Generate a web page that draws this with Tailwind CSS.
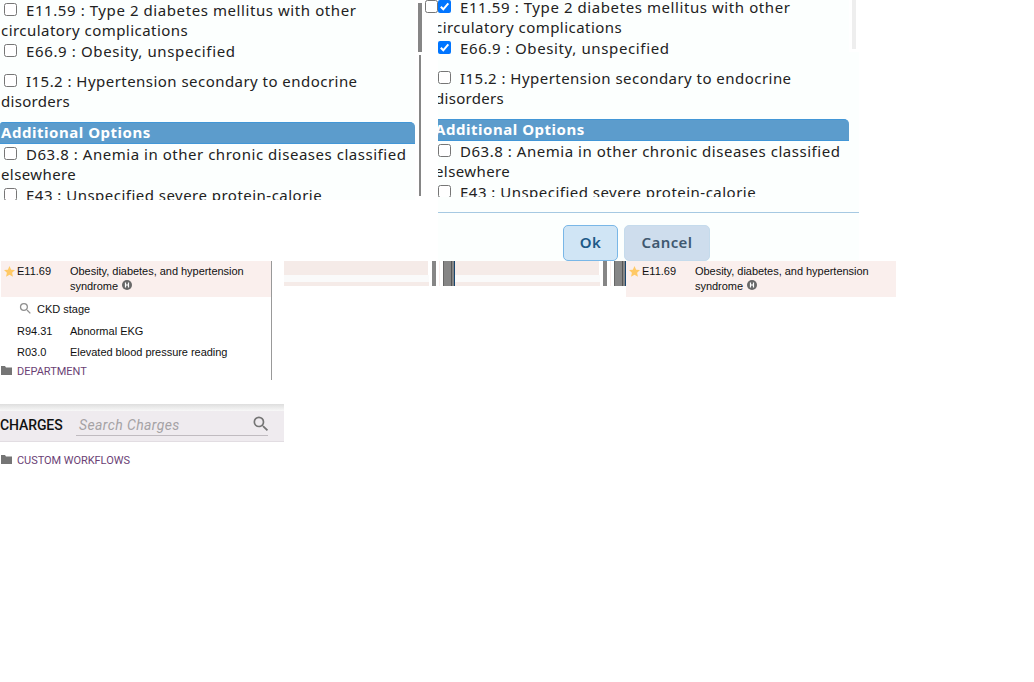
<!DOCTYPE html>
<html lang="en">
<head>
<meta charset="utf-8">
<title>Diagnosis options</title>
<script src="https://cdn.jsdelivr.net/npm/@tailwindcss/browser@4"></script>
</head>
<body class="bg-white w-[1034px] h-[682px] overflow-hidden text-[#222]">
<svg class="hidden">
  <symbol id="star" viewBox="0 0 24 24"><path fill="#ffc966" d="M12 0l3.600 8 8.400.900-6.300 5.800 1.800 8.600L12 19l-7.500 4.300 1.800-8.600L0 8.900 8.400 8z"/></symbol>
  <symbol id="folder" viewBox="0 0 11 9"><path fill="#757575" d="M0 0h4l1 1.500h6V9H0z"/></symbol>
  <symbol id="search" viewBox="0 0 24 24"><path fill="#757575" d="M15.500 14h-.79l-.28-.27A6.471 6.471 0 0 0 16 9.500 6.500 6.500 0 1 0 9.500 16c1.610 0 3.090-.59 4.230-1.570l.27.28v.79l5 4.990L20.490 19l-4.990-5zm-6 0C7.010 14 5 11.990 5 9.500S7.010 5 9.500 5 14 7.010 14 9.500 11.990 14 9.500 14z"/></symbol>
  <symbol id="hcc" viewBox="0 0 10 10"><circle cx="5" cy="5" r="5" fill="#686868"/><path d="M3.500 2.600v4.800M6.500 2.600v4.800M3.500 5h3" stroke="#fff" stroke-width="1.200" fill="none"/></symbol>
  <symbol id="on" viewBox="0 0 13 13"><rect width="13" height="13" rx="2" fill="#0075ff"/><path d="M2.800 6.700l2.500 2.600 5-6" stroke="#fff" stroke-width="2" fill="none"/></symbol>
  <symbol id="off" viewBox="0 0 13 13"><rect x=".5" y=".5" width="12" height="12" rx="2" fill="#fff" stroke="#767676"/></symbol>
</svg>

<div class="flex h-[261px] font-['Noto_Sans'] text-[15px] leading-[20px] whitespace-nowrap tracking-[0.5px]">
  <section class="w-[415px] h-[200px] bg-[#fcfffe] overflow-hidden">
    <div class="flex h-5 pl-1"><svg class="w-[13px] h-[13px] mt-[3px] mr-[9px] shrink-0"><use href="#off"/></svg><span class="tracking-[0.58px]">E11.59 : Type 2 diabetes mellitus with other</span></div>
    <div class="h-5 pl-[1px] tracking-[0.46px]">circulatory complications</div>
    <div class="flex h-[31px] pl-1 pt-[1px]"><svg class="w-[13px] h-[13px] mt-[3px] mr-[9px] shrink-0"><use href="#off"/></svg><span class="tracking-[0.63px]">E66.9 : Obesity, unspecified</span></div>
    <div class="flex h-5 pl-1"><svg class="w-[13px] h-[13px] mt-[3px] mr-[9px] shrink-0"><use href="#off"/></svg><span class="tracking-[0.46px]">I15.2 : Hypertension secondary to endocrine</span></div>
    <div class="h-[31px] pl-[1px] tracking-[0.3px]">disorders</div>
    <div class="h-[22px] rounded-tr-[5px] rounded-tl-[3px] border-y border-[#4297d7] bg-[#5c9ccc] pl-[1px] font-bold text-white tracking-[0.53px] leading-[18px]">Additional Options</div>
    <div class="flex h-5 pl-1"><svg class="w-[13px] h-[13px] mt-[3px] mr-[9px] shrink-0"><use href="#off"/></svg><span class="tracking-[0.53px]">D63.8 : Anemia in other chronic diseases classified</span></div>
    <div class="h-[21px] pl-[1px] tracking-[0.4px]">elsewhere</div>
    <div class="flex h-5 pl-1"><svg class="w-[13px] h-[13px] mt-[3px] mr-[9px] shrink-0"><use href="#off"/></svg><span class="tracking-[0.48px]">E43 : Unspecified severe protein-calorie</span></div>
  </section>
  <div class="w-[23px] relative flex flex-col pt-[3px] pl-[3px]">
    <div class="w-1 h-[49px] bg-[#868686]"></div>
    <div class="w-[2px] h-[141px] mt-[3px] ml-[1px] bg-[#868686]"></div>
    <svg class="absolute left-[10px] top-0 w-[13px] h-[13px]"><use href="#off"/></svg>
  </div>
  <section class="w-[421px] bg-[#fcfffe]">
    <div class="h-[213px] border-b border-[#a6c9e2] flex">
      <div class="w-[411px] h-[197px] overflow-hidden">
        <div class="-mt-[3px] flex h-5"><svg class="w-[13px] h-[13px] mt-[3px] mr-[9px] shrink-0"><use href="#on"/></svg><span class="tracking-[0.58px]">E11.59 : Type 2 diabetes mellitus with other</span></div>
        <div class="h-5 -ml-[3px] tracking-[0.46px]">circulatory complications</div>
        <div class="flex h-[31px] pt-[1px]"><svg class="w-[13px] h-[13px] mt-[3px] mr-[9px] shrink-0"><use href="#on"/></svg><span class="tracking-[0.63px]">E66.9 : Obesity, unspecified</span></div>
        <div class="flex h-5"><svg class="w-[13px] h-[13px] mt-[3px] mr-[9px] shrink-0"><use href="#off"/></svg><span class="tracking-[0.46px]">I15.2 : Hypertension secondary to endocrine</span></div>
        <div class="h-[31px] -ml-[3px] tracking-[0.3px]">disorders</div>
        <div class="h-[22px] rounded-tr-[5px] border-y border-[#4297d7] bg-[#5c9ccc] font-bold text-white tracking-[0.53px] leading-[18px]"><span class="-ml-[3px]">Additional Options</span></div>
        <div class="flex h-5"><svg class="w-[13px] h-[13px] mt-[3px] mr-[9px] shrink-0"><use href="#off"/></svg><span class="tracking-[0.53px]">D63.8 : Anemia in other chronic diseases classified</span></div>
        <div class="h-[21px] -ml-[3px] tracking-[0.4px]">elsewhere</div>
        <div class="flex h-5"><svg class="w-[13px] h-[13px] mt-[3px] mr-[9px] shrink-0"><use href="#off"/></svg><span class="tracking-[0.48px]">E43 : Unspecified severe protein-calorie</span></div>
      </div>
      <div class="w-[10px] h-[52px] bg-white pl-[3px]"><div class="w-1 h-[49px] bg-[#eee]"></div></div>
    </div>
    <div class="flex pt-3 pl-[125px] gap-[6px] font-semibold text-[15px] leading-[18px] tracking-[0.4px]">
      <div class="w-[55px] h-9 rounded-[5px] border border-[#79b7e7] bg-[#d0e5f5] text-[#1d5987] flex items-center justify-center pb-[2px]">Ok</div>
      <div class="w-[86px] h-9 rounded-[5px] border border-[#c5dbec] bg-[#cedded] text-[#3f5870] flex items-center justify-center pb-[2px]">Cancel</div>
    </div>
  </section>
</div>

<div class="flex h-[143px] font-['Liberation_Sans'] text-[11px] leading-[15px] text-[#111] whitespace-nowrap">
  <section class="w-[272px] h-[119px] border-r border-[#999] pl-[1px]">
    <div class="h-9 bg-[#faefed] flex pt-[3px] pl-[3px]">
      <svg class="w-[11px] h-[11px] mt-[2px] mr-[2px]"><use href="#star"/></svg><span class="w-[53px]">E11.69</span>
      <div class="tracking-[-0.03px]">Obesity, diabetes, and hypertension<div class="flex">syndrome<svg class="w-[10px] h-[10px] ml-1 mt-[1px]"><use href="#hcc"/></svg></div></div>
    </div>
    <div class="flex h-[27px] pt-[5px] pl-[17px]"><svg class="w-[15px] h-[15px] mr-[4px] -mt-[1px] opacity-80"><use href="#search"/></svg>CKD stage</div>
    <div class="flex h-[21px] pl-4"><span class="w-[53px]">R94.31</span>Abnormal EKG</div>
    <div class="flex h-[19px] pl-4"><span class="w-[53px]">R03.0</span><span class="tracking-[-0.03px]">Elevated blood pressure reading</span></div>
    <div class="flex font-[Roboto] text-[#6b3f75]"><svg class="w-[11px] h-[9px] mr-[5px] mt-[2px]"><use href="#folder"/></svg>DEPARTMENT</div>
  </section>
  <div class="w-3"></div>
  <div class="w-[171px] h-[25px] flex">
    <div class="w-[145px]"><div class="w-[144px] h-[14px] bg-[#f5ebe8]"></div><div class="h-[7px] bg-[#fafafa]"></div><div class="h-1 bg-[#f5ebe8]"></div></div>
    <div class="w-1 ml-[3px] bg-[#868686]"></div>
    <div class="w-[1px] ml-[3px] bg-[#faefed]"></div>
    <div class="w-[12px] ml-[3px] flex border-l border-[#666] bg-[#868686]"><div class="w-[1px] ml-[7px] bg-[#555]"></div><div class="w-[1px] ml-[2px] bg-[#17456f]"></div></div>
  </div>
  <div class="w-[171px] h-[25px] flex">
    <div class="w-[145px]"><div class="w-[144px] h-[14px] bg-[#f5ebe8]"></div><div class="h-[7px] bg-[#fafafa]"></div><div class="h-1 bg-[#f5ebe8]"></div></div>
    <div class="w-1 ml-[3px] bg-[#868686]"></div>
    <div class="w-[1px] ml-[3px] bg-[#faefed]"></div>
    <div class="w-[12px] ml-[3px] flex border-l border-[#666] bg-[#868686]"><div class="w-[1px] ml-[7px] bg-[#555]"></div><div class="w-[1px] ml-[2px] bg-[#17456f]"></div></div>
  </div>
  <div class="w-[270px] h-9 bg-[#faefed] flex pt-[3px] pl-[3px]">
    <svg class="w-[11px] h-[11px] mt-[2px] mr-[2px]"><use href="#star"/></svg><span class="w-[53px]">E11.69</span>
    <div class="tracking-[-0.03px]">Obesity, diabetes, and hypertension<div class="flex">syndrome<svg class="w-[10px] h-[10px] ml-1 mt-[1px]"><use href="#hcc"/></svg></div></div>
  </div>
</div>

<section class="w-[284px] font-[Roboto] whitespace-nowrap">
  <div class="h-[7px] bg-linear-to-b from-[#dedede] to-[#f8f8f8]"></div>
  <div class="h-[31px] bg-[#efebef] border-b border-[#e2dde2] flex">
    <div class="w-[76px] pt-[4px] text-[14px] leading-[20px] font-medium text-[#111] tracking-[-0.1px]">CHARGES</div>
    <div class="w-[192px] h-[25px] border-b border-[#c0bbc0] flex justify-between pl-[3px] pt-[4px] text-[14px] leading-[20px] italic text-[#a5a2a5] tracking-[0.4px]">Search Charges<svg class="w-5 h-5 -mr-[3px] -mt-[1px]"><use href="#search"/></svg></div>
  </div>
  <div class="flex pt-[11px] pl-[1px] text-[11px] leading-[15px] text-[#6b3f75] tracking-[-0.05px]"><svg class="w-[11px] h-[9px] mr-[5px] mt-[2px]"><use href="#folder"/></svg>CUSTOM WORKFLOWS</div>
</section>
</body>
</html>
